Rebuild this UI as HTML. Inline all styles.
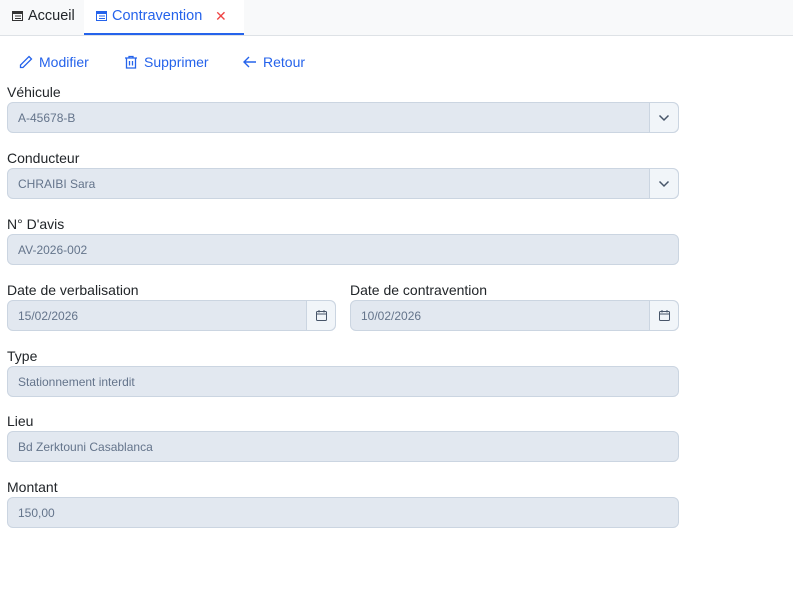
<!DOCTYPE html>
<html><head><meta charset="utf-8"><style>
*{box-sizing:border-box;margin:0;padding:0}
body{width:793px;height:615px;background:#fff;font-family:"Liberation Sans",sans-serif;position:relative;overflow:hidden}
.tabs{position:absolute;left:0;top:0;width:793px;height:36px;background:#f8f9fa;border-bottom:1px solid #dee2e6}
.tab{position:absolute;top:0;height:35px;font-size:14.5px;line-height:33px;color:#212529}
.tab.active{background:#fff;border-bottom:2px solid #2563eb;color:#2563eb;left:84px;width:160px}
.tab svg{vertical-align:-1px;margin-right:5px}
.act{position:absolute;top:54px;font-size:14px;color:#2563eb;line-height:16px}
.act svg{vertical-align:-3px;margin-right:5px}
.lbl{position:absolute;left:7px;font-size:14px;color:#212529}
.f{position:absolute;height:31px;background:#e2e8f0;border:1px solid #cbd5e1;border-radius:6px;font-size:12px;color:#64748b;line-height:29px;padding-left:10px;padding-top:1px}
.btn{position:absolute;right:0;top:0;width:29px;height:29px;background:#f1f5f9;border-left:1px solid #cbd5e1;border-radius:0 6px 6px 0;display:flex;align-items:center;justify-content:center}
</style></head><body>
<div class="tabs">
<div class="tab" style="left:12px"><svg width="11" height="10" viewBox="0 0 11 10"><rect x="0.5" y="0.5" width="10" height="9" fill="none" stroke="#333" /><rect x="0.5" y="0.5" width="10" height="2.5" fill="#333"/><path d="M3 5h6M3 7.5h6" stroke="#333"/></svg>Accueil</div>
<div class="tab active"><span style="margin-left:12px"><svg width="11" height="10" viewBox="0 0 11 10"><rect x="0.5" y="0.5" width="10" height="9" fill="none" stroke="#2563eb" /><rect x="0.5" y="0.5" width="10" height="2.5" fill="#2563eb"/><path d="M3 5h6M3 7.5h6" stroke="#2563eb"/></svg>Contravention</span><span style="position:absolute;left:131px;color:#ef4444;font-size:14px">✕</span></div>
</div>
<div class="act" style="left:18px"><svg width="16" height="16" viewBox="0 0 16 16" fill="none" stroke="#2563eb" stroke-width="1.3"><path d="M11 2.5l2.5 2.5L5 13.5H2.5V11z"/></svg>Modifier</div>
<div class="act" style="left:123px"><svg width="16" height="16" viewBox="0 0 16 16" fill="none" stroke="#2563eb" stroke-width="1.3"><path d="M2 4h12M6 4V2.5h4V4M3.5 4v10h9V4M6.5 7v4.5M9.5 7v4.5"/></svg>Supprimer</div>
<div class="act" style="left:242px"><svg width="16" height="16" viewBox="0 0 16 16" fill="none" stroke="#2563eb" stroke-width="1.4"><path d="M14 8H2M7 3L2 8l5 5"/></svg>Retour</div>

<div class="lbl" style="top:84px">Véhicule</div>
<div class="f" style="left:7px;top:102px;width:672px">A-45678-B<div class="btn"><svg width="12" height="8" viewBox="0 0 12 8" fill="none" stroke="#475569" stroke-width="1.5"><path d="M1.5 1.5L6 6l4.5-4.5"/></svg></div></div>
<div class="lbl" style="top:150px">Conducteur</div>
<div class="f" style="left:7px;top:168px;width:672px">CHRAIBI Sara<div class="btn"><svg width="12" height="8" viewBox="0 0 12 8" fill="none" stroke="#475569" stroke-width="1.5"><path d="M1.5 1.5L6 6l4.5-4.5"/></svg></div></div>
<div class="lbl" style="top:216px">N° D'avis</div>
<div class="f" style="left:7px;top:234px;width:672px">AV-2026-002</div>
<div class="lbl" style="top:282px">Date de verbalisation</div>
<div class="lbl" style="top:282px;left:350px">Date de contravention</div>
<div class="f" style="left:7px;top:300px;width:329px">15/02/2026<div class="btn"><svg width="11" height="11" viewBox="0 0 11 11" fill="none" stroke="#475569"><rect x="0.5" y="1.5" width="10" height="9" rx="1"/><path d="M0.5 4h10M3 0v2.5M8 0v2.5"/></svg></div></div>
<div class="f" style="left:350px;top:300px;width:329px">10/02/2026<div class="btn"><svg width="11" height="11" viewBox="0 0 11 11" fill="none" stroke="#475569"><rect x="0.5" y="1.5" width="10" height="9" rx="1"/><path d="M0.5 4h10M3 0v2.5M8 0v2.5"/></svg></div></div>
<div class="lbl" style="top:348px">Type</div>
<div class="f" style="left:7px;top:366px;width:672px">Stationnement interdit</div>
<div class="lbl" style="top:413px">Lieu</div>
<div class="f" style="left:7px;top:431px;width:672px">Bd Zerktouni Casablanca</div>
<div class="lbl" style="top:479px">Montant</div>
<div class="f" style="left:7px;top:497px;width:672px">150,00</div>
</body></html>
